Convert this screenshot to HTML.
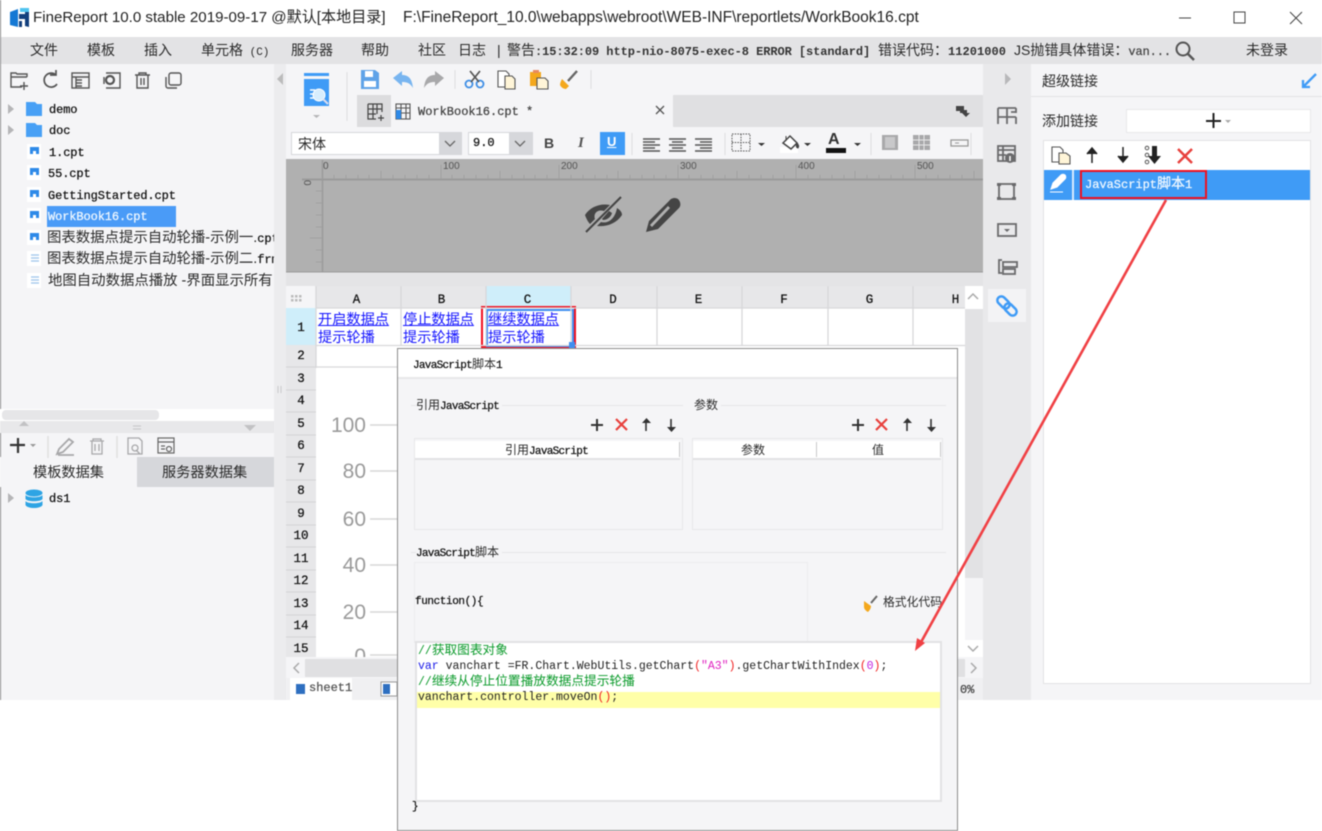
<!DOCTYPE html>
<html><head><meta charset="utf-8"><style>
html,body{margin:0;padding:0;background:#fff}
#r{position:relative;width:1322px;height:831px;overflow:hidden;background:#fff;filter:blur(.4px);font-family:"Liberation Sans","Noto Sans CJK SC",sans-serif;color:#222}
#r div{position:absolute}
.t{white-space:nowrap;line-height:16px;font-size:14px;color:#2b2b2b}
.m{font-family:"Liberation Mono","Noto Sans CJK SC",monospace;font-size:12px;letter-spacing:-.1px;color:#111;-webkit-text-stroke:.25px}
.j{font-family:"Liberation Mono",monospace;font-size:11px;letter-spacing:-.7px;color:#111;-webkit-text-stroke:.25px}
.h{width:30px;text-align:center;font-family:"Liberation Mono",monospace;font-size:12.5px;left:286px;color:#111;line-height:16px;-webkit-text-stroke:.25px}
.c{text-align:center;font-family:"Liberation Mono",monospace;font-size:12.5px;top:292px;color:#111;line-height:16px;-webkit-text-stroke:.25px}
.a{color:#1414ff;font-size:14.2px;line-height:18px;white-space:nowrap}
.a u{text-decoration:underline}
.y{font-size:21px;color:#9a9a9a;text-align:right;line-height:22px;left:316px;width:50px}
.code{font-family:"Liberation Mono","Noto Sans CJK SC",monospace;font-size:11.5px;line-height:16px;white-space:nowrap;left:418px;color:#222}
.code i{font-style:normal;font-size:12.7px}
svg{position:absolute;left:0;top:0}
</style></head><body><div id="r">

<!-- chrome backgrounds -->
<div style="left:0;top:37px;width:1322px;height:27px;background:#e3e3e5"></div>
<div style="left:0;top:64px;width:274px;height:636px;background:#f5f5f7"></div>
<div style="left:0;top:0;width:1px;height:700px;background:#8a8a8a"></div>
<div style="left:274px;top:64px;width:12px;height:636px;background:#ececee"></div>
<div style="left:286px;top:64px;width:697px;height:31px;background:#f5f5f7"></div>
<div style="left:286px;top:95px;width:72px;height:32px;background:#f5f5f7"></div>
<div style="left:358px;top:95px;width:625px;height:32px;background:#e0e0e2"></div>
<div style="left:357px;top:95px;width:34px;height:32px;background:#dcdcde"></div>
<div style="left:391px;top:95px;width:282px;height:32px;background:#f5f5f7"></div>
<div style="left:286px;top:127px;width:697px;height:32px;background:#f5f5f7"></div>
<div style="left:286px;top:159px;width:697px;height:113px;background:#b0b0b0"></div>
<div style="left:286px;top:272px;width:697px;height:14px;background:#e4e4e6"></div>
<div style="left:983px;top:64px;width:48px;height:636px;background:#e9e9eb"></div>
<div style="left:1031px;top:64px;width:291px;height:636px;background:#f5f5f7"></div>

<!-- title -->
<div class="t" style="left:33px;top:10px;font-size:15.1px;color:#222">FineReport 10.0 stable 2019-09-17 @默认[本地目录]</div>
<div class="t" style="left:403px;top:10px;font-size:15.5px;color:#222">F:\FineReport_10.0\webapps\webroot\WEB-INF\reportlets/WorkBook16.cpt</div>

<!-- menu -->
<div class="t" style="left:30px;top:42px">文件</div>
<div class="t" style="left:87px;top:42px">模板</div>
<div class="t" style="left:144px;top:42px">插入</div>
<div class="t" style="left:201px;top:42px">单元格<span style="font-size:11px;font-family:'Liberation Mono'"> (C)</span></div>
<div class="t" style="left:291px;top:42px">服务器</div>
<div class="t" style="left:361px;top:42px">帮助</div>
<div class="t" style="left:418px;top:42px">社区</div>
<div class="t" style="left:458px;top:42px">日志</div>
<div class="t" style="left:497px;top:42px">|</div>
<div class="t" style="left:507px;top:42px">警告<span class="m" style="letter-spacing:-.07px;font-weight:bold;color:#333;-webkit-text-stroke:0">:15:32:09 http-nio-8075-exec-8 ERROR [standard]</span></div>
<div class="t" style="left:878px;top:42px">错误代码：<span class="m" style="font-weight:bold;color:#333;letter-spacing:.05px;-webkit-text-stroke:0">11201000</span></div>
<div class="t" style="left:1014px;top:42px">JS抛错具体错误：<span class="m" style="color:#444">van...</span></div>
<div class="t" style="left:1246px;top:42px">未登录</div>

<!-- left tree -->
<div class="t m" style="left:49px;top:102px">demo</div>
<div class="t m" style="left:49px;top:123px">doc</div>
<div class="t m" style="left:49px;top:145px">1.cpt</div>
<div class="t m" style="left:48px;top:166px">55.cpt</div>
<div class="t m" style="left:48px;top:188px">GettingStarted.cpt</div>
<div style="left:47px;top:206px;width:129px;height:21px;background:#4a9bf7"></div>
<div class="t m" style="left:48px;top:209px;color:#f0f8ff">WorkBook16.cpt</div>
<div style="left:47px;top:228px;width:227px;height:62px;overflow:hidden">
<div class="t" style="left:0;top:2px;font-size:14.4px">图表数据点提示自动轮播-示例一.<span class="m">cpt</span></div>
<div class="t" style="left:0;top:23px;font-size:14.4px">图表数据点提示自动轮播-示例二.<span class="m">frm</span></div>
<div class="t" style="left:1px;top:45px;font-size:14.4px">地图自动数据点播放 -界面显示所有</div>
</div>
<div style="left:0;top:409px;width:274px;height:12px;background:#fff"></div>
<div style="left:2px;top:410px;width:157px;height:10px;background:#e6e6e8;border-radius:4px"></div>
<div style="left:0;top:421px;width:274px;height:12px;background:#e8e8ea"></div>
<div style="left:0;top:457px;width:137px;height:30px;background:#f5f5f7"></div>
<div style="left:137px;top:457px;width:137px;height:30px;background:#d6d7db"></div>
<div class="t" style="left:33px;top:465px;font-size:14.2px">模板数据集</div>
<div class="t" style="left:162px;top:465px;font-size:14.2px">服务器数据集</div>
<div class="t m" style="left:49px;top:491px">ds1</div>

<!-- toolbar text -->
<div class="t m" style="left:418px;top:104px;letter-spacing:0;color:#444">WorkBook16.cpt *</div>
<div style="left:291px;top:132px;width:171px;height:23px;background:#d6d7db"></div>
<div style="left:292px;top:133px;width:147px;height:21px;background:#fff"></div>
<div class="t" style="left:298px;top:136px">宋体</div>
<div style="left:468px;top:132px;width:65px;height:23px;background:#d6d7db"></div>
<div style="left:469px;top:133px;width:40px;height:21px;background:#fff"></div>
<div class="t m" style="left:473px;top:135px;letter-spacing:0;font-size:12px">9.0</div>
<div style="left:600px;top:132px;width:25px;height:23px;background:#3f9bf6"></div>
<div class="t" style="left:544px;top:135px;font-weight:bold;font-size:14px;color:#444">B</div>
<div class="t" style="left:578px;top:135px;font-style:italic;font-weight:bold;font-family:'Liberation Serif';font-size:15px;color:#555">I</div>
<div class="t" style="left:607px;top:134px;font-weight:bold;font-size:13px;color:#fff"><u>U</u></div>
<div class="t" style="left:828px;top:132px;font-weight:bold;font-size:16px;color:#333">A</div>

<!-- ruler labels -->
<div class="t" style="left:323px;top:159px;font-size:10px;color:#555">0</div>
<div class="t" style="left:443px;top:159px;font-size:10px;color:#555">100</div>
<div class="t" style="left:561px;top:159px;font-size:10px;color:#555">200</div>
<div class="t" style="left:680px;top:159px;font-size:10px;color:#555">300</div>
<div class="t" style="left:798px;top:159px;font-size:10px;color:#555">400</div>
<div class="t" style="left:917px;top:159px;font-size:10px;color:#555">500</div>

<!-- sheet -->
<div style="left:286px;top:286px;width:697px;height:392px;background:#fff"></div>
<div style="left:316px;top:286px;width:649px;height:22px;background:#e7e7e9"></div>
<div style="left:486px;top:286px;width:85px;height:22px;background:#cfeefa"></div>
<div style="left:286px;top:286px;width:30px;height:22px;background:#f5f5f7"></div>
<div style="left:286px;top:308px;width:30px;height:370px;background:#e7e7e9"></div>
<div style="left:286px;top:308px;width:30px;height:37px;background:#cfeefa"></div>
<div class="c" style="left:314px;width:85px">A</div><div class="c" style="left:399px;width:85px">B</div><div class="c" style="left:485px;width:85px">C</div><div class="c" style="left:570px;width:86px">D</div><div class="c" style="left:656px;width:85px">E</div><div class="c" style="left:741px;width:86px">F</div><div class="c" style="left:827px;width:85px">G</div><div class="c" style="left:913px;width:85px">H</div>
<div style="left:965px;top:286px;width:18px;height:392px;background:#f5f5f7"></div>
<div style="left:965px;top:286px;width:18px;height:23px;background:#fff"></div>
<div style="left:965px;top:309px;width:18px;height:269px;background:#e2e2e4"></div>
<div style="left:965px;top:640px;width:18px;height:18px;background:#fff"></div>
<div class="h" style="top:320px">1</div><div class="h" style="top:348px">2</div><div class="h" style="top:371px">3</div><div class="h" style="top:393px">4</div><div class="h" style="top:416px">5</div><div class="h" style="top:438px">6</div><div class="h" style="top:461px">7</div><div class="h" style="top:483px">8</div><div class="h" style="top:506px">9</div><div class="h" style="top:528px">10</div><div class="h" style="top:551px">11</div><div class="h" style="top:573px">12</div><div class="h" style="top:596px">13</div><div class="h" style="top:618px">14</div><div class="h" style="top:641px">15</div>
<div class="a" style="left:318px;top:311px"><u>开启数据点</u><br>提示轮播</div>
<div class="a" style="left:403px;top:311px"><u>停止数据点</u><br>提示轮播</div>
<div class="a" style="left:488px;top:311px"><u>继续数据点</u><br>提示轮播</div>
<div class="y" style="top:415px">100</div><div class="y" style="top:461px">80</div><div class="y" style="top:509px">60</div><div class="y" style="top:555px">40</div><div class="y" style="top:602px">20</div><div class="y" style="top:646px;height:11px;overflow:hidden">0</div>
<div style="left:286px;top:657px;width:697px;height:21px;background:#f5f5f7"></div>
<div style="left:305px;top:659px;width:660px;height:18px;background:#e0e0e2"></div>
<div style="left:286px;top:678px;width:697px;height:22px;background:#f0f0f2"></div>
<div style="left:290px;top:678px;width:62px;height:22px;background:#fff"></div>
<div class="t m" style="left:309px;top:680px;color:#555;letter-spacing:0">sheet1</div>
<div class="t m" style="left:960px;top:682px;color:#444">0%</div>

<!-- right panel -->
<div style="left:1031px;top:96px;width:291px;height:1px;background:#e2e2e4"></div>
<div class="t" style="left:1042px;top:73px">超级链接</div>
<div class="t" style="left:1042px;top:113px">添加链接</div>
<div style="left:1126px;top:109px;width:183px;height:22px;background:#fff;border:1px solid #e8e8ea"></div>
<div style="left:1043px;top:140px;width:266px;height:542px;background:#fff;border:1px solid #e3e3e5"></div>
<div style="left:1044px;top:170px;width:266px;height:30px;background:#3f9bf6"></div>
<div style="left:1072px;top:170px;width:2px;height:30px;background:#d8ebfd"></div>
<div style="left:1080px;top:170px;width:123px;height:25px;border:2.5px solid #f01020"></div>
<div class="t m" style="left:1085px;top:177px;color:#f0f8ff;letter-spacing:0">JavaScript<span style="font-size:14px">脚本</span>1</div>
<div style="left:988px;top:289px;width:38px;height:33px;background:#f3f3f5"></div>

<!-- C1 selection -->
<div style="left:481px;top:306px;width:91px;height:38px;border:2.5px solid #f01020"></div>
<div style="left:486px;top:309px;width:88px;height:38px;border:2.5px solid #3f8ef0;box-sizing:border-box"></div>

<!-- grid + icons -->
<svg width="1322" height="831" viewBox="0 0 1322 831">
<!-- logo -->
<path d="M10 12l8-3v18l-8-2z" fill="#1478d4"/><path d="M19 14h6v5h-6zM25 12h4v15l-4-1z" fill="#123f7d"/><path d="M20 8h9v4h-9z" fill="#4fc3ef"/><path d="M19 21h3v6h-3z" fill="#123f7d"/>
<!-- window controls -->
<path d="M1179 18h12" stroke="#444" stroke-width="1"/><rect x="1234" y="12" width="11" height="11" fill="none" stroke="#444"/><path d="M1290 12l12 12M1302 12l-12 12" stroke="#444" fill="none"/>
<!-- search -->
<circle cx="1183" cy="49" r="6.5" fill="none" stroke="#555" stroke-width="2"/><path d="M1188 54l6 6" stroke="#555" stroke-width="2.4"/>
<!-- left toolbar -->
<g fill="none" stroke="#555" stroke-width="1.4">
<path d="M27 77v-3H17l-1-1h-5v14h11M24 82v8M20 86h8M11 77h16"/>
<path d="M56 75a7 7 0 1 0 1 9M50 75h6v-5" stroke-width="1.7"/>
<rect x="72" y="73" width="17" height="15"/><path d="M72 77h17M76 80h6M76 83h6M76 86h6M76 77v11"/>
<path d="M106 73h14v15h-14M104 77v7"/><circle cx="110" cy="80" r="4" stroke-width="2.200"/>
<path d="M135 75h15M139 75v-2h7v2M137 75v13h11V75M141 78v7M144 78v7"/>
<rect x="169" y="73" width="12" height="12" rx="2"/><path d="M166 77v9a2 2 0 0 0 2 2h9"/>
</g>
<!-- tree -->
<path d="M8 104l6 5-6 5zM8 125l6 5-6 5zM8 493l6 5-6 5z" fill="#b5b5b7"/>
<path d="M26 102h9l2 2h5v12H26zM26 123h9l2 2h5v12H26z" fill="#48a0f5"/>
<g fill="#fff"><rect x="27" y="144" width="14" height="15"/><rect x="27" y="165" width="14" height="15"/><rect x="27" y="187" width="14" height="15"/><rect x="27" y="208" width="14" height="15"/><rect x="27" y="230" width="14" height="15"/><rect x="27" y="251" width="14" height="15"/><rect x="27" y="273" width="14" height="15"/></g>
<g fill="#2e8ae8"><path d="M30 147h9v7h-3v-3h-3v3h-3z"/><path d="M30 168h9v7h-3v-3h-3v3h-3z"/><path d="M30 190h9v7h-3v-3h-3v3h-3z"/><path d="M30 211h9v7h-3v-3h-3v3h-3z"/><path d="M30 233h9v7h-3v-3h-3v3h-3z"/></g>
<path d="M31 255h8M31 258h8M31 261h8M31 277h8M31 280h8M31 283h8" stroke="#9cc4ec" stroke-width="1.2"/>
<ellipse cx="34" cy="493" rx="8.5" ry="3.5" fill="#2ea4e4"/><path d="M25.500 495v4c2 3 15 3 17 0v-4c-2 3-15 3-17 0zM25.500 501v4c2 4 15 4 17 0v-4c-2 3-15 3-17 0z" fill="#2ea4e4"/>
<!-- left lower toolbar -->
<path d="M24 421l5 5H19zM244 425h12l-6 6z" fill="#c2c2c4"/>
<path d="M133 426h8M133 429h8" stroke="#c5c5c7"/>
<path d="M10 445h15M18 438v15" stroke="#333" stroke-width="2.2"/><path d="M30 444h6l-3 3z" fill="#999"/>
<g fill="none" stroke="#a8a8aa" stroke-width="1.3"><path d="M48 436v22M117 436v22" stroke="#ddd"/><path d="M59 449l10-10 4 3-10 10-6 2zM58 455h16" stroke-width="1.8"/><path d="M90 441h14M93 441v-2h8v2M92 441v13h10v-13M95 444v7M99 444v7"/><path d="M128 438h11l3 3v13h-14zM136 450l4 4"/><circle cx="135" cy="448" r="3"/></g>
<g fill="none" stroke="#666" stroke-width="1.2"><rect x="158" y="438" width="16" height="15"/><path d="M158 442h16M161 446h4M161 449h4"/><circle cx="169" cy="449" r="2.500"/></g>
<path d="M277 79l6-6v12z" fill="#bbb"/><path d="M278 386v7M281 386v7" stroke="#c8c8ca"/>
<path d="M1005 73l6 6-6 6z" fill="#b8b8ba"/>
<!-- center toolbar -->
<rect x="304" y="73" width="25" height="3" fill="#3f9bf6"/><path d="M304 79h25v27h-25z" fill="#3f9bf6"/><circle cx="319" cy="95" r="6" fill="#d8edfd" stroke="#fff"/><path d="M310 90h5M310 94h4M310 98h4" stroke="#fff" stroke-width="1.4"/><path d="M323 99l5 5" stroke="#dde" stroke-width="2"/><path d="M313 115h7l-3.500 3z" fill="#b5b5b7"/>
<path d="M347 72v49M455 70v19M591 70v19" stroke="#dedee0"/>
<path d="M361 70h14l4 3v16h-18z" fill="#5fa3e8"/><rect x="365" y="71" width="8" height="6" fill="#fff"/><rect x="364" y="81" width="12" height="6" fill="#fff"/>
<path d="M393 78l9-7v4c6 0 10 3 11 13-3-5-6-6-11-6v4z" fill="#78b5f0"/>
<path d="M444 78l-9-7v4c-6 0-10 3-11 13 3-5 6-6 11-6v4z" fill="#a8a8aa"/>
<g fill="none" stroke="#3f8fe6" stroke-width="1.800"><circle cx="469" cy="84" r="3.500"/><circle cx="480" cy="84" r="3.500"/></g><path d="M470 71l9 11M480 71l-9 11" stroke="#555" stroke-width="1.700"/>
<path d="M498 71h8l3 3v13h-11z" fill="#fff" stroke="#555" stroke-width="1.100"/><path d="M505 76h7l3 3v10h-10z" fill="#fff5d8" stroke="#555" stroke-width="1.100"/>
<rect x="530" y="72" width="11" height="14" fill="#f4a81c"/><rect x="533" y="70" width="6" height="3" fill="#e88a60"/><path d="M537 78h8l3 3v8h-11z" fill="#fff5d8" stroke="#555" stroke-width="1.100"/>
<path d="M562 79l7 7-3 3c-3 0-5-2-6-4 0-2 1-4 2-6z" fill="#f4a81c"/><path d="M568 81l9-10" stroke="#666" stroke-width="2.400"/>
<!-- tab icons -->
<g fill="none" stroke="#444" stroke-width="1.200"><path d="M368 104h14v8M368 104v15h8M373 104v15M368 109h14M368 114h8M377 104v10"/><path d="M378 118h6M381 115v6"/></g>
<g fill="none" stroke="#555" stroke-width="1.100"><rect x="396" y="104" width="14" height="15"/><path d="M396 108h14M396 113h14M401 104v15M406 104v15"/></g><rect x="396" y="110" width="5" height="9" fill="#2e8ae8"/>
<path d="M656 106l8 8M664 106l-8 8" stroke="#555" stroke-width="1.300"/>
<path d="M956 106h8v4h3v3h-7v-2h-4z" fill="#444"/><path d="M962 113h8l-4 4z" fill="#444"/>
<!-- format row -->
<path d="M445 141l5 5 5-5M515 141l5 5 5-5" fill="none" stroke="#666" stroke-width="1.300"/>
<path d="M632 133v22M725 133v22M871 133v22M971 133v22" stroke="#dcdcde"/>
<g stroke="#555" stroke-width="1.500"><path d="M643 139h17M643 142h12M643 145h17M643 148h12M643 151h17"/><path d="M669 139h17M672 142h11M669 145h17M672 148h11M669 151h17"/><path d="M695 139h17M700 142h12M695 145h17M700 148h12M695 151h17"/></g>
<rect x="732" y="134" width="18" height="17" fill="none" stroke="#555" stroke-dasharray="1.500 1.200"/><path d="M741 134v17M732 142.500h18" stroke="#555" stroke-dasharray="1.500 1.200"/>
<path d="M758 143h7l-3.500 3zM804 143h7l-3.500 3zM854 143h7l-3.500 3z" fill="#333"/>
<rect x="780" y="147" width="18" height="6" fill="#fff"/><path d="M783 143l7-7 7 7-6 6z" fill="#fff" stroke="#444" stroke-width="1.500"/><path d="M786 136v5M797 143c2 2 2 4 1 5-2 0-2-3-1-5z" stroke="#444" fill="#444"/>
<rect x="826" y="148" width="20" height="5" fill="#111"/>
<rect x="882" y="135" width="16" height="15" fill="#a8a8aa"/><rect x="885" y="137" width="10" height="11" fill="#c8c8ca"/>
<rect x="913" y="135" width="17" height="15" fill="#a8a8aa"/><path d="M913 140h17M913 145h17M919 135v15M924 135v15" stroke="#e8e8e8"/>
<rect x="951" y="140" width="17" height="6" fill="none" stroke="#999" stroke-width="1.300"/><path d="M955 143h4" stroke="#999"/>
<!-- ruler -->
<g fill="none"><path d="M302 179.500H983" stroke-width="2" stroke="#9a9a9a"/><path d="M322.500 160V272" stroke-width="1.400" stroke="#9a9a9a"/><path d="M286 272H983" stroke="#9a9a9a" stroke-width="1"/>
<path stroke="#a0a0a0" d="M322 160v19M441 165v14M559 165v14M678 165v14M796 165v14M915 165v14M381 171v8M500 171v8M618 171v8M737 171v8M855 171v8M974 171v8M334 175v4M346 175v4M358 175v4M369 175v4M393 175v4M405 175v4M417 175v4M429 175v4M452 175v4M464 175v4M476 175v4M488 175v4M512 175v4M524 175v4M535 175v4M547 175v4M571 175v4M583 175v4M595 175v4M607 175v4M630 175v4M642 175v4M654 175v4M666 175v4M689 175v4M701 175v4M713 175v4M725 175v4M749 175v4M761 175v4M773 175v4M784 175v4M808 175v4M820 175v4M832 175v4M844 175v4M867 175v4M879 175v4M891 175v4M903 175v4M926 175v4M938 175v4M950 175v4M962 175v4M316 191h6M316 203h6M316 215h6M316 227h6M310 238h12M316 250h6M316 262h6"/></g>
<text x="307" y="186" font-size="10" fill="#555" font-family="Liberation Sans" transform="rotate(90 307 183) translate(-3 0)">0</text>
<!-- eye & pencil -->
<path d="M585 215C590 207 600 203 610 205L604 211C598 209 593 213 595 219L590 224C588 222 586 218 585 215zM617 208C620 210 622 212 622 215C616 224 606 227 597 226L601 222C608 224 615 219 617 208z" fill="#454545"/><path d="M603 220c4 0 8-3 9-7l-3-2-7 8z" fill="#454545"/><path d="M586 232l35-35" stroke="#454545" stroke-width="2"/>
<path d="M646 232l3-11 20-20c2-3 6-4 9-2 3 3 3 7 1 9l-21 21zM650 225l2 2 18-19-2-2z" fill="#454545" fill-rule="evenodd"/>
<!-- grid -->
<g stroke="#d8d8da" stroke-width="1.300" fill="none"><path d="M316 308H965M316 345.500H965M316 367H398M401 286v59M486 286v59M571 286v59M657 286v59M742 286v59M828 286v59M913 286v59M316 286v82"/></g>
<g stroke="#d4d4d6"><path d="M286 367h30M286 390h30M286 412h30M286 435h30M286 457h30M286 480h30M286 502h30M286 525h30M286 547h30M286 570h30M286 592h30M286 615h30M286 637h30"/></g>
<g stroke="#d8d8d8" stroke-width="1.500"><path d="M370 425h28M370 471h28M370 519h28M370 565h28M370 612h28M370 655h28"/></g>
<g fill="#bbb"><rect x="291" y="295" width="2.500" height="2.500"/><rect x="295" y="295" width="2.500" height="2.500"/><rect x="299" y="295" width="2.500" height="2.500"/><rect x="291" y="299" width="2.500" height="2.500"/><rect x="295" y="299" width="2.500" height="2.500"/><rect x="299" y="299" width="2.500" height="2.500"/></g>
<rect x="569" y="342" width="6" height="6" fill="#3f8ef0"/>
<path d="M968 299l5-5 5 5M968 646l5 5 5-5M299 663l-5 5 5 5M971 663l5 5-5 5" fill="none" stroke="#aaa" stroke-width="1.500"/>
<rect x="296" y="684" width="9" height="10" fill="#2e6fc0"/><rect x="381" y="682" width="16" height="14" fill="#fff" stroke="#999"/><rect x="383" y="684" width="7" height="10" fill="#2e6fc0"/>
<!-- right side icons -->
<g fill="none" stroke="#6a6a6c" stroke-width="1.800"><path d="M998 108h18M998 108v16M1016 117h-18M1007 108v16M1016 108v5M1016 117v7M1011 112h5"/>
<rect x="998" y="146" width="17" height="15"/><path d="M998 150h17M1003 146v15M998 155h8"/><rect x="999" y="184" width="15" height="15"/><rect x="998" y="224" width="18" height="12"/><path d="M1002 260h-3v13h3"/><rect x="1003" y="262" width="14" height="5"/><rect x="1003" y="269" width="12" height="5"/></g>
<circle cx="1010" cy="158" r="5" fill="#6a6a6c"/><path d="M1010 156v5" stroke="#fff" stroke-width="1.500"/>
<g fill="#6a6a6c"><rect x="997" y="183" width="4" height="3"/><rect x="1012" y="183" width="4" height="3"/><rect x="997" y="197" width="4" height="3"/><rect x="1012" y="197" width="4" height="3"/></g>
<path d="M1004 229h6l-3 3z" fill="#6a6a6c"/>
<g transform="translate(1007 306) rotate(45)" fill="none" stroke="#3f9bf6" stroke-width="2.500"><rect x="-12" y="-4" width="14" height="8" rx="4"/><rect x="-2" y="-4" width="14" height="8" rx="4"/></g>
<!-- right panel icons -->
<path d="M1304 86l12-12M1303 80v7h7" fill="none" stroke="#3f9bf6" stroke-width="2.300"/>
<path d="M1206 121h15M1213.500 113v15" stroke="#222" stroke-width="2"/><path d="M1225 120h6l-3 3z" fill="#aaa"/>
<path d="M1052 147h8l3 3v12h-11z" fill="#fff" stroke="#555" stroke-width="1.100"/><path d="M1059 153h7l4 3v8h-11z" fill="#fff5d8" stroke="#555" stroke-width="1.100"/>
<path d="M1092 163v-12M1087 154l5-6 5 6" fill="#222" stroke="#222" stroke-width="1.500"/>
<path d="M1123 147v12M1118 156l5 6 5-6" fill="#222" stroke="#222" stroke-width="1.500"/>
<circle cx="1147" cy="148" r="1.800" fill="none" stroke="#555"/><circle cx="1147" cy="155" r="1.800" fill="none" stroke="#555"/><circle cx="1147" cy="162" r="1.800" fill="none" stroke="#555"/><path d="M1152 146h5v10h4l-6.500 8-6.500-8h4z" fill="#222"/>
<path d="M1178 149l14 14M1192 149l-14 14" stroke="#e8403c" stroke-width="2.500"/>
<path d="M1051 189l2-6 8-8c1-1 3-1 4 0s1 3 0 4l-8 8zM1050 192h13" fill="#fff" stroke="#fff" stroke-width="1.100"/>
</svg>

<!-- dialog -->
<div style="left:397px;top:348px;width:559px;height:481px;border:1px solid #8c8c8c;background:#f5f5f7"></div>
<div style="left:398px;top:349px;width:559px;height:28px;background:#fff;border-bottom:2px solid #e8e8ea"></div>
<div class="t" style="left:413px;top:356px;font-size:12px"><span class="j">JavaScript</span>脚本<span class="j">1</span></div>
<div style="left:411px;top:405px;width:272px;height:1px;background:#e6e6e8"></div>
<div style="left:694px;top:405px;width:252px;height:1px;background:#e6e6e8"></div>
<div class="t" style="left:416px;top:397px;font-size:12px;background:#f5f5f7;padding-right:3px">引用<span class="j">JavaScript</span></div>
<div class="t" style="left:694px;top:397px;font-size:12px;background:#f5f5f7;padding-right:3px">参数</div>
<div style="left:414px;top:438px;width:267px;height:90px;border:1px solid #e8e8ea;background:#f5f5f7"></div>
<div style="left:692px;top:438px;width:249px;height:90px;border:1px solid #e8e8ea;background:#f5f5f7"></div>
<div style="left:415px;top:441px;width:265px;height:17px;background:#fff;border-bottom:2px solid #e2e2e4"></div>
<div style="left:693px;top:441px;width:248px;height:17px;background:#fff;border-bottom:2px solid #e2e2e4"></div>
<div style="left:679px;top:442px;width:1px;height:15px;background:#c8c8ca"></div>
<div style="left:816px;top:442px;width:1px;height:15px;background:#c8c8ca"></div>
<div style="left:940px;top:442px;width:1px;height:15px;background:#c8c8ca"></div>
<div class="t" style="left:505px;top:442px;font-size:12px">引用<span class="j">JavaScript</span></div>
<div class="t" style="left:741px;top:442px;font-size:12px">参数</div>
<div class="t" style="left:872px;top:442px;font-size:12px">值</div>
<div style="left:411px;top:552px;width:535px;height:1px;background:#e6e6e8"></div>
<div class="t" style="left:416px;top:544px;font-size:12px;background:#f5f5f7;padding-right:3px"><span class="j">JavaScript</span>脚本</div>
<div style="left:414px;top:562px;width:392px;height:80px;border:1px solid #ececee;border-bottom:0;background:#f5f5f7"></div>
<div class="t m" style="left:415px;top:594px;font-size:11px;letter-spacing:-.4px">function(){</div>
<div class="t" style="left:883px;top:594px;font-size:11.800px">格式化代码</div>
<div style="left:415px;top:641px;width:523px;height:157px;background:#fff;border:2px solid #e2e2e4"></div>
<div style="left:417px;top:692px;width:523px;height:16px;background:#ffffa8"></div>
<div class="code" style="top:643px;color:#0a9a2a">//<i>获取图表对象</i></div>
<div class="code" style="top:659px"><span style="color:#1a1ae8">var</span> vanchart =FR.Chart.WebUtils.getChart<span style="color:#f02020">(</span><span style="color:#e020c0">"A3"</span><span style="color:#f02020">)</span>.getChartWithIndex<span style="color:#f02020">(</span><span style="color:#c020e0">0</span><span style="color:#f02020">)</span>;</div>
<div class="code" style="top:674px;color:#0a9a2a">//<i>继续从停止位置播放数据点提示轮播</i></div>
<div class="code" style="top:690px">vanchart.controller.moveOn<span style="color:#f02020">()</span>;</div>
<div class="t m" style="left:412px;top:799px;font-size:11px">}</div>

<svg width="1322" height="831" viewBox="0 0 1322 831">
<g stroke="#333" stroke-width="2" fill="none"><path d="M591 425h12M597 419v12M852 425h12M858 419v12"/></g>
<path d="M616 419l11 11M627 419l-11 11M876 419l11 11M887 419l-11 11" stroke="#e8403c" stroke-width="2.200"/>
<path d="M646 431v-10M931 419v10M671 419v10M907 431v-10" stroke="#333" stroke-width="1.600"/>
<path d="M642 423l4.500-5 4.500 5zM903 423l4.500-5 4.500 5zM667 427l4.500 5 4.500-5zM927 427l4.500 5 4.500-5z" fill="#333"/>
<path d="M864 601l7 5c0 2-1 4-3 6-2-1-4-3-4-5z" fill="#f4a81c"/><path d="M871 603l6-7" stroke="#666" stroke-width="2"/>
<path d="M1166 200L920 644" stroke="#f04044" stroke-width="2.600" fill="none"/>
<path d="M915 651l2-13 8 5z" fill="#f04044"/>
</svg>
</div></body></html>
